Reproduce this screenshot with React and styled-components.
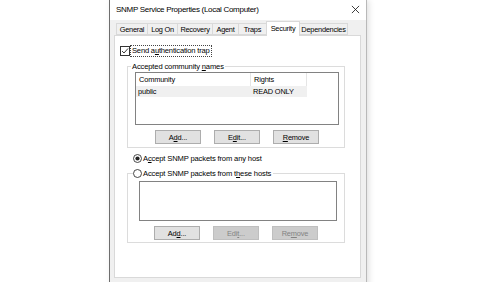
import React from "react";
import styled, { createGlobalStyle } from "styled-components";

const GlobalStyle = createGlobalStyle`
  html, body {
    margin: 0;
    padding: 0;
    background: #ffffff;
    overflow: hidden;
  }
  body {
    font-family: "Liberation Sans", Arial, sans-serif;
    font-size: 8px;
    color: #000;
  }
`;

const Page = styled.div`
  width: 480px;
  height: 282px;
  display: flex;
  padding-left: 109px;
  box-sizing: border-box;
`;

const Dialog = styled.div`
  width: 258px;
  height: 300px;
  display: flex;
  flex-direction: column;
  background: #f0f0f0;
  border-left: 1px solid #6e6e6e;
  border-right: 1px solid #b9b9b9;
  box-shadow: 2px 0 6px rgba(0, 0, 0, 0.12);
  box-sizing: border-box;
`;

const TitleBar = styled.div`
  height: 18px;
  background: #ffffff;
  display: flex;
  align-items: center;
  justify-content: space-between;
  padding: 0 6px 2px 6px;
  font-size: 8px;
  letter-spacing: -0.3px;
`;

const Close = styled.svg`
  width: 9px;
  height: 9px;
`;

const Body = styled.div`
  padding: 0 5px 0 4px;
  display: flex;
  flex-direction: column;
`;

const TabStrip = styled.div`
  height: 15px;
  display: flex;
  align-items: flex-end;
  padding-left: 3px;
`;

const Tab = styled.div`
  box-sizing: border-box;
  width: ${(p) => p.$w}px;
  height: ${(p) => (p.$active ? "15px" : "12px")};
  margin-bottom: ${(p) => (p.$active ? "-1px" : "0")};
  padding-bottom: ${(p) => (p.$active ? "2px" : "0")};
  background: ${(p) => (p.$active ? "#ffffff" : "#f0f0f0")};
  border: 1px solid #d9d9d9;
  border-bottom: ${(p) => (p.$active ? "none" : "1px solid #d9d9d9")};
  margin-left: -1px;
  display: flex;
  align-items: center;
  justify-content: center;
  white-space: nowrap;
  font-size: 7.4px;
  letter-spacing: -0.25px;
  position: relative;
  z-index: ${(p) => (p.$active ? 1 : 0)};
`;

const Panel = styled.div`
  height: 243px;
  background: #ffffff;
  border: 1px solid #d9d9d9;
  box-sizing: border-box;
  padding: 9px 0 0 5px;
  display: flex;
  flex-direction: column;
`;

const CheckRow = styled.div`
  display: flex;
  align-items: center;
  gap: 1px;
  height: 12px;
`;

const Box = styled.div`
  width: 8px;
  height: 8px;
  border: 1px solid #333;
  display: flex;
  align-items: center;
  justify-content: center;
  background: #fff;
`;

const FocusLabel = styled.span`
  outline: 1px dotted #444;
  padding: 0 1px;
  font-size: 7.6px;
  letter-spacing: -0.2px;
  line-height: 10px;
`;

const Group = styled.fieldset`
  margin: ${(p) => p.$top}px 0 0 7px;
  width: 218px;
  height: ${(p) => p.$h}px;
  border: 1px solid #dcdcdc;
  padding: 0;
  box-sizing: border-box;
`;

const Legend = styled.legend`
  font-size: 7.6px;
  letter-spacing: -0.15px;
  padding: 0 1px;
  margin-left: 3px;
  line-height: 9px;
`;

const ListBox = styled.div`
  margin: ${(p) => p.$m};
  width: ${(p) => p.$w}px;
  height: ${(p) => p.$h}px;
  border: 1px solid #828282;
  background: #fff;
  box-sizing: border-box;
`;

const HeaderRow = styled.div`
  display: grid;
  grid-template-columns: 115px 56px;
  height: 13px;
  align-items: center;
`;

const HeaderCell = styled.div`
  padding-left: 3px;
  height: 13px;
  display: flex;
  align-items: center;
  border-right: 1px solid #e5e5e5;
  font-size: 7.4px;
  letter-spacing: -0.15px;
`;

const DataRow = styled.div`
  display: grid;
  grid-template-columns: 115px 56px;
  height: 11px;
  align-items: center;
  background: ${(p) => (p.$selected ? "#f0f0f0" : "transparent")};
  width: 171px;
  font-size: 7.4px;
  letter-spacing: -0.15px;
`;

const Cell = styled.div`
  padding-left: 2px;
`;

const ButtonRow = styled.div`
  display: flex;
  gap: 13px;
  margin: ${(p) => p.$m};
`;

const Button = styled.div`
  width: 46px;
  height: 14px;
  box-sizing: border-box;
  background: ${(p) => (p.$disabled ? "#cccccc" : "#e1e1e1")};
  border: 1px solid ${(p) => (p.$disabled ? "#bfbfbf" : "#adadad")};
  color: ${(p) => (p.$disabled ? "#838383" : "#000")};
  display: flex;
  align-items: center;
  justify-content: center;
  font-size: 7.4px;
  letter-spacing: -0.15px;
`;

const RadioRow = styled.div`
  display: flex;
  align-items: center;
  gap: 1px;
  margin: ${(p) => p.$m};
  font-size: 7.6px;
  letter-spacing: -0.15px;
  height: 10px;
`;

const RadioLegend = styled.legend`
  margin-left: 5px;
  padding: 0 2px 0 0;
  display: flex;
  align-items: center;
  gap: 1px;
  font-size: 7.6px;
  letter-spacing: -0.15px;
  line-height: 9px;
`;

const Radio = ({ checked }) => (
  <svg width="9" height="9" viewBox="0 0 9 9">
    <circle cx="4.5" cy="4.5" r="4" fill="#fff" stroke="#333" strokeWidth="0.9" />
    {checked && <circle cx="4.5" cy="4.5" r="2.1" fill="#222" />}
  </svg>
);

const U = styled.u`
  text-decoration-thickness: 1px;
`;

const tabs = [
  ["General", 32],
  ["Log On", 31],
  ["Recovery", 36],
  ["Agent", 27],
  ["Traps", 29],
  ["Security", 34],
  ["Dependencies", 49],
];

export default function App() {
  return (
    <>
      <GlobalStyle />
      <Page>
        <Dialog>
          <TitleBar>
            <span>SNMP Service Properties (Local Computer)</span>
            <Close viewBox="0 0 10 10">
              <path d="M1 1 L9 9 M9 1 L1 9" stroke="#111" strokeWidth="0.9" />
            </Close>
          </TitleBar>
          <Body>
            <TabStrip>
              {tabs.map(([name, w]) => (
                <Tab key={name} $w={w} $active={name === "Security"}>
                  {name}
                </Tab>
              ))}
            </TabStrip>
            <Panel>
              <CheckRow>
                <Box>
                  <svg width="8" height="8" viewBox="0 0 8 8">
                    <path d="M1 4 L3 6 L7 1.5" fill="none" stroke="#222" strokeWidth="0.9" />
                  </svg>
                </Box>
                <FocusLabel>
                  Send a<U>u</U>thentication trap
                </FocusLabel>
              </CheckRow>
              <Group $top={5} $h={86}>
                <Legend>
                  Accepted community <U>n</U>ames
                </Legend>
                <ListBox $m="1px 0 0 7px" $w={204} $h={53}>
                  <HeaderRow>
                    <HeaderCell>Community</HeaderCell>
                    <HeaderCell>Rights</HeaderCell>
                  </HeaderRow>
                  <DataRow $selected>
                    <Cell>public</Cell>
                    <Cell>READ ONLY</Cell>
                  </DataRow>
                </ListBox>
                <ButtonRow $m="5px 0 0 27px">
                  <Button>
                    A<U>d</U>d...
                  </Button>
                  <Button>
                    E<U>d</U>it...
                  </Button>
                  <Button>
                    <U>R</U>emove
                  </Button>
                </ButtonRow>
              </Group>
              <RadioRow $m="5px 0 0 13px">
                <Radio checked />
                <span>
                  A<U>c</U>cept SNMP packets from any host
                </span>
              </RadioRow>
              <Group $top={6} $h={74}>
                <RadioLegend>
                  <Radio />
                  <span>
                    Accept SNMP packets from t<U>h</U>ese hosts
                  </span>
                </RadioLegend>
                <ListBox $m="3px 0 0 11px" $w={198} $h={40}></ListBox>
                <ButtonRow $m="5px 0 0 26px">
                  <Button>
                    Ad<U>d</U>...
                  </Button>
                  <Button $disabled>
                    Edi<U>t</U>...
                  </Button>
                  <Button $disabled>
                    Re<U>m</U>ove
                  </Button>
                </ButtonRow>
              </Group>
            </Panel>
          </Body>
        </Dialog>
      </Page>
    </>
  );
}
